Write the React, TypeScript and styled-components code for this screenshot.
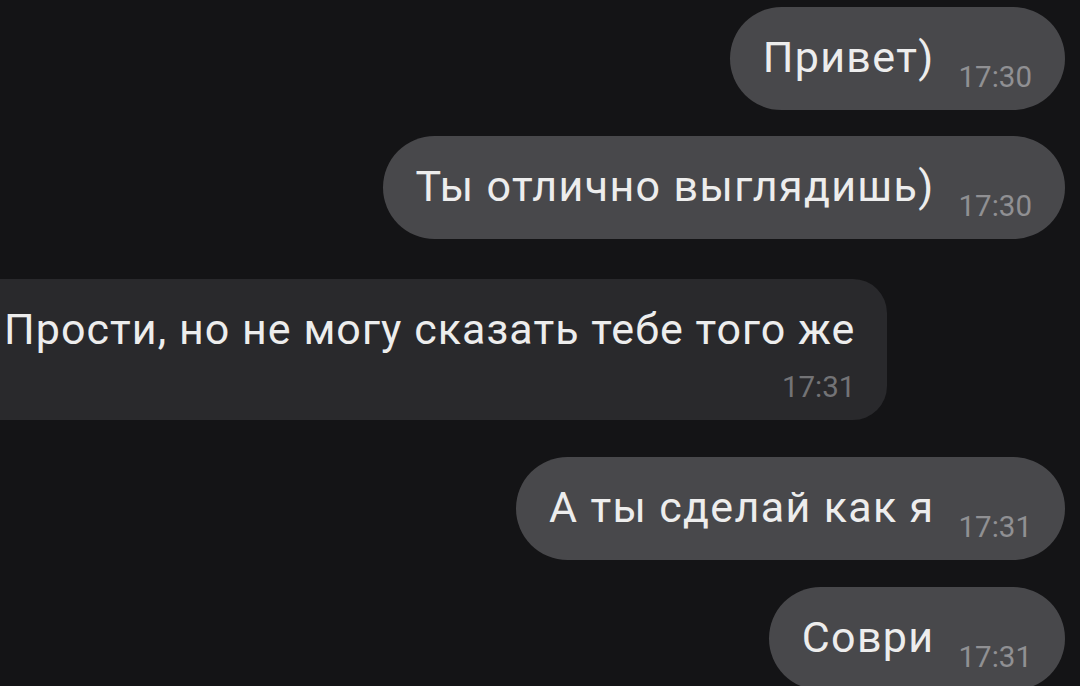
import React from "react";
import styled, { createGlobalStyle } from "styled-components";

const GlobalStyle = createGlobalStyle`
  html, body {
    margin: 0;
    padding: 0;
    background: #141416;
    overflow: hidden;
  }
  body {
    font-family: Roboto, "Noto Sans", "Liberation Sans", sans-serif;
  }
`;

const Chat = styled.div`
  width: 1080px;
  height: 686px;
  overflow: hidden;
  background: #141416;
  display: flex;
  flex-direction: column;
  padding: 7px 15px 0 0;
  box-sizing: border-box;
`;

const Row = styled.div<{ $out: boolean; $gap: number }>`
  display: flex;
  justify-content: ${(p) => (p.$out ? "flex-end" : "flex-start")};
  margin-top: ${(p) => p.$gap}px;
  flex-shrink: 0;
`;

const OutBubble = styled.div`
  display: flex;
  align-items: flex-end;
  gap: 24px;
  background: #48484b;
  border-radius: 52px;
  padding: 26px 33px 15px 33px;
`;

const InBubble = styled.div`
  display: flex;
  flex-direction: column;
  align-items: flex-end;
  gap: 16px;
  background: #29292c;
  border-radius: 34px;
  margin-left: -40px;
  padding: 26px 32px 15px 44px;
`;

const Text = styled.span<{ $lift?: boolean }>`
  color: #ededed;
  font-size: 43px;
  letter-spacing: ${(p) => (p.$lift ? "1.35px" : "1.05px")};
  line-height: 49px;
  white-space: nowrap;
  margin-bottom: ${(p) => (p.$lift ? "13px" : "0")};
  align-self: ${(p) => (p.$lift ? "auto" : "flex-start")};
`;

const Time = styled.span<{ $dim?: boolean }>`
  color: ${(p) => (p.$dim ? "#737376" : "#909093")};
  font-size: 29.5px;
  line-height: 35px;
  white-space: nowrap;
`;

type Msg = { out: boolean; text: string; time: string; gap: number };

const messages: Msg[] = [
  { out: true, text: "Привет)", time: "17:30", gap: 0 },
  { out: true, text: "Ты отлично выглядишь)", time: "17:30", gap: 26 },
  { out: false, text: "Прости, но не могу сказать тебе того же", time: "17:31", gap: 40 },
  { out: true, text: "А ты сделай как я", time: "17:31", gap: 37 },
  { out: true, text: "Соври", time: "17:31", gap: 27 },
];

export default function App() {
  return (
    <>
      <GlobalStyle />
      <Chat>
        {messages.map((m, i) => (
          <Row key={i} $out={m.out} $gap={m.gap}>
            {m.out ? (
              <OutBubble>
                <Text $lift>{m.text}</Text>
                <Time>{m.time}</Time>
              </OutBubble>
            ) : (
              <InBubble>
                <Text>{m.text}</Text>
                <Time $dim>{m.time}</Time>
              </InBubble>
            )}
          </Row>
        ))}
      </Chat>
    </>
  );
}
